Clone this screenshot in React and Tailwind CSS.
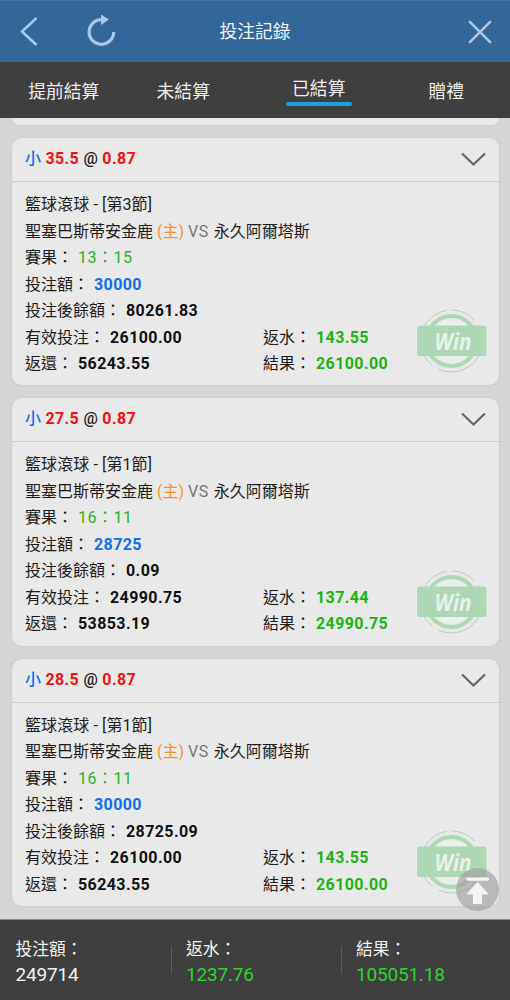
import {useState} from "react"

const TABS = [
    {id: "early", label: "提前結算", offset: ""},
    {id: "open", label: "未結算", offset: "pr-4"},
    {id: "settled", label: "已結算", offset: ""},
    {id: "gift", label: "贈禮", offset: ""},
]

const BETS = [
    {
        id: 1,
        line: "35.5",
        odds: "0.87",
        period: "籃球滾球 - [第3節]",
        score: "13：15",
        stake: "30000",
        balance: "80261.83",
        valid: "26100.00",
        returned: "56243.55",
        rebate: "143.55",
        result: "26100.00",
    },
    {
        id: 2,
        line: "27.5",
        odds: "0.87",
        period: "籃球滾球 - [第1節]",
        score: "16：11",
        stake: "28725",
        balance: "0.09",
        valid: "24990.75",
        returned: "53853.19",
        rebate: "137.44",
        result: "24990.75",
    },
    {
        id: 3,
        line: "28.5",
        odds: "0.87",
        period: "籃球滾球 - [第1節]",
        score: "16：11",
        stake: "30000",
        balance: "28725.09",
        valid: "26100.00",
        returned: "56243.55",
        rebate: "143.55",
        result: "26100.00",
    },
]

const TOTALS = [
    {label: "投注額：", value: "249714", color: "text-[#f2f2f2]"},
    {label: "返水：", value: "1237.76", color: "text-[#2fd32f]"},
    {label: "結果：", value: "105051.18", color: "text-[#2fd32f]"},
]

function WinStamp() {
    return (
        <svg className="absolute right-[11px] bottom-[11px]" width="72" height="66" viewBox="0 0 72 66" fill="none">
            <circle cx="35.5" cy="33" r="27.5" fill="#e1efe3"/>
            <circle cx="35.5" cy="33" r="22" fill="#e9efea"/>
            <circle cx="35.5" cy="33" r="25" stroke="#b0d7b6" strokeWidth="4"/>
            <circle cx="35.5" cy="33" r="31" stroke="#b3d1b8" strokeWidth="1" strokeDasharray="62 7 72 5 26 6 12 5"/>
            <rect x="1" y="17.5" width="69.5" height="30.5" rx="3" fill="#aed7b5"/>
            <text x="18.5" y="42" fill="#e8f2e9" fontFamily="'Open Sans', sans-serif" fontSize="23" fontWeight="700"
                  fontStyle="italic" textLength="37" lengthAdjust="spacingAndGlyphs">Win</text>
        </svg>
    )
}

function Amount({color = "text-[#111111]", children}) {
    return <span className={`ml-[5px] font-bold tracking-[0.4px] ${color}`}>{children}</span>
}

function BetCard({bet}) {
    return (
        <article
            className="relative h-[247.4px] shrink-0 rounded-[10px] bg-[#e9e9e9] text-base text-[#1c1c1c] shadow-[0_0_3px_rgba(0,0,0,0.08)]">
            <header className="flex h-11 items-center justify-between border-b border-[#cbcbcb] pl-[13px] pr-3 pb-px">
                <p className="font-bold tracking-[0.4px] text-[#ee1111]">
                    <span className="font-medium tracking-normal text-[#0f6fee]">小</span> {bet.line}{" "}
                    <span className="font-medium tracking-normal text-[#1c1c1c]">@</span> {bet.odds}
                </p>
                <svg width="27" height="16" viewBox="0 0 27 16" fill="none">
                    <path d="M2 2.5L13.5 13.5L25 2.5" stroke="#666666" strokeWidth="2.2"/>
                </svg>
            </header>
            <div className="pl-[13px] pt-[10px] leading-[26.5px]">
                <p className="tracking-[0.1px]">{bet.period}</p>
                <p>聖塞巴斯蒂安金鹿 <span className="text-[#f7931e]">(主)</span> <span
                    className="tracking-[0.5px] text-[#777777]">VS</span> <span className="ml-px">永久阿爾塔斯</span></p>
                <p>賽果：<span className="ml-[5px] tracking-[0.5px] text-[#28b31f]">{bet.score}</span></p>
                <p>投注額：<Amount color="text-[#0f6fee]">{bet.stake}</Amount></p>
                <p>投注後餘額：<Amount>{bet.balance}</Amount></p>
                <div className="grid grid-cols-[238px_1fr]">
                    <p>有效投注：<Amount>{bet.valid}</Amount></p>
                    <p>返水：<Amount color="text-[#1cb414]">{bet.rebate}</Amount></p>
                    <p>返還：<Amount>{bet.returned}</Amount></p>
                    <p>結果：<Amount color="text-[#1cb414]">{bet.result}</Amount></p>
                </div>
            </div>
            <WinStamp/>
        </article>
    )
}

export default function App() {
    const [activeTab, setActiveTab] = useState("settled")

    return (
        <div
            className="relative flex h-[1000px] w-[510px] flex-col overflow-hidden bg-[#d6d6d6] font-[Roboto,'Noto_Sans_CJK_TC',sans-serif]">
            <header
                className="grid h-[62px] shrink-0 grid-cols-[1fr_auto_1fr] items-center border-t border-[#4b74a0] bg-[#336699]">
                <div className="flex items-center gap-[46px] pl-[19px]">
                    <button className="cursor-pointer">
                        <svg width="20" height="32" viewBox="0 0 20 32" fill="none">
                            <path d="M17.5 2L3 15.5L17.5 29" stroke="#a9c8ec" strokeWidth="2.6"/>
                        </svg>
                    </button>
                    <button className="cursor-pointer">
                        <svg width="32" height="34" viewBox="0 0 32 34" fill="none">
                            <path d="M28.7 17A12.3 12.3 0 1 1 16.4 4.7H18" stroke="#a9c8ec" strokeWidth="3.2"/>
                            <path d="M16 -0.5L24 4.5L16 10Z" fill="#a9c8ec"/>
                        </svg>
                    </button>
                </div>
                <h1 className="pt-px text-[17.8px] text-[#f2f5f8]">投注記錄</h1>
                <button className="mr-[18px] cursor-pointer justify-self-end">
                    <svg width="24" height="24" viewBox="0 0 24 24" fill="none">
                        <path d="M1.8 1.8L22.2 22.2M22.2 1.8L1.8 22.2" stroke="#b5cbe3" strokeWidth="2.4"
                              strokeLinecap="round"/>
                    </svg>
                </button>
            </header>

            <nav className="grid h-14 shrink-0 grid-cols-4 bg-[#3f3f3f] text-[17.8px] text-[#f0f0f0]">
                {TABS.map((tab) => (
                    <button
                        key={tab.id}
                        onClick={() => setActiveTab(tab.id)}
                        className={`flex cursor-pointer flex-col items-center justify-center ${tab.offset}`}
                    >
                        {tab.id === activeTab ? (
                            <>
                                <span className="pt-0.5">{tab.label}</span>
                                <span className="-mt-px ml-px h-1 w-[66px] rounded-xs bg-[#1a9fe3]"/>
                            </>
                        ) : (
                            <span className="pt-[5px]">{tab.label}</span>
                        )}
                    </button>
                ))}
            </nav>

            <main className="flex min-h-0 flex-1 flex-col gap-[13px] overflow-hidden pl-3 pr-[11px]">
                <div className="h-[7px] shrink-0 rounded-b-[10px] bg-[#e9e9e9] shadow-[0_0_3px_rgba(0,0,0,0.08)]"/>
                {BETS.map((bet) => (
                    <BetCard key={bet.id} bet={bet}/>
                ))}
            </main>

            <footer
                className="grid h-[81px] shrink-0 grid-cols-[171px_170px_1fr] items-center border-t border-[#8a8a8a] bg-[#3f3f3f]">
                {TOTALS.map((total, i) => (
                    <div key={total.label} className="flex items-center">
                        {i > 0 && <span className="h-7 w-px bg-[#5c5c5c]"/>}
                        <div className={i > 0 ? "pl-[14px] pt-1" : "pl-[15.5px] pt-1"}>
                            <p className="text-[16.8px] leading-[26px] text-[#f2f2f2]">{total.label}</p>
                            <p className={`text-[19px] leading-[26px] tracking-[-0.2px] ${total.color}`}>{total.value}</p>
                        </div>
                    </div>
                ))}
            </footer>

            <button
                className="absolute right-[11.5px] bottom-[89.5px] h-[43px] w-[43px] cursor-pointer rounded-full bg-[#999999]/60">
                <svg width="43" height="43" viewBox="0 0 43 43" fill="#f4f4f4">
                    <rect x="10.5" y="9.5" width="22.5" height="3.2" rx="1"/>
                    <path d="M21.5 14L33 26.5H26V36H17V26.5H10Z"/>
                </svg>
            </button>
        </div>
    )
}
